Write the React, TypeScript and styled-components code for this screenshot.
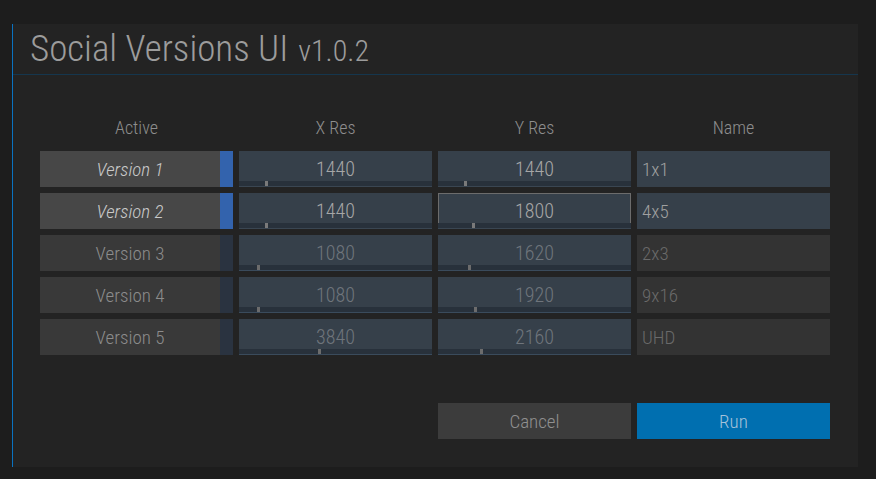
import React from "react";
import styled, { createGlobalStyle, css } from "styled-components";

const GlobalStyle = createGlobalStyle`
  html, body { margin: 0; padding: 0; background: #1d1d1d; }
  body { font-family: "Roboto Condensed", "Roboto", "Liberation Sans", sans-serif; font-weight: 300; }
`;

const Page = styled.div`
  padding: 24px 0 12px 12px;
`;

const Panel = styled.div`
  width: 845px;
  background: #232323;
  border-left: 1px solid #0a72c0;
`;

const Header = styled.div`
  padding: 7px 0 7px 17px;
  border-bottom: 1px solid #15364d;
`;

const Title = styled.h1`
  margin: 0;
  font-size: 37px;
  line-height: 36px;
  font-weight: 300;
  color: #9c9c9c;
  white-space: nowrap;
`;

const VersionTag = styled.span`
  font-size: 30px;
  line-height: 28px;
  margin-left: 10px;
`;

const Body = styled.div`
  padding: 43px 27px 28px 27px;
`;

const Grid = styled.div`
  display: grid;
  grid-template-columns: repeat(4, 193px);
  column-gap: 6px;
  row-gap: 6px;
`;

const ColHead = styled.div`
  font-size: 18px;
  line-height: 19px;
  height: 19px;
  text-align: center;
  color: #8e8e8e;
  margin-bottom: 8px;
`;

const ActiveCell = styled.div`
  display: flex;
  height: 36px;
`;

const ToggleButton = styled.button<{ $on: boolean }>`
  flex: 1;
  border: none;
  margin: 0;
  padding: 0;
  font-family: inherit;
  font-weight: 300;
  font-size: 19px;
  ${(p) =>
    p.$on
      ? css`
          background: #474747;
          color: #cacaca;
          font-style: italic;
        `
      : css`
          background: #393939;
          color: #8c8c8c;
        `}
`;

const Indicator = styled.div<{ $on: boolean }>`
  width: 13px;
  background: ${(p) => (p.$on ? "#3363ad" : "#2a3340")};
`;

const NumCell = styled.div<{ $focus?: boolean }>`
  height: 36px;
  display: flex;
  flex-direction: column;
  background: #36404a;
  outline: ${(p) => (p.$focus ? "1px solid #6c6c6c" : "none")};
  outline-offset: -1px;
`;

const NumValue = styled.div<{ $on: boolean }>`
  flex: 1;
  display: flex;
  align-items: center;
  justify-content: center;
  padding-top: 6px;
  font-size: 20px;
  color: ${(p) => (p.$on ? "#a6a6a6" : "#6f757c")};
`;

const Track = styled.div<{ $on: boolean }>`
  position: relative;
  height: 5px;
  background: #28313b;
  border-bottom: 1px solid ${(p) => (p.$on ? "#3a4652" : "#3a4b5c")};
`;

const Handle = styled.div<{ $on: boolean }>`
  position: absolute;
  top: 0;
  width: 3px;
  height: 5px;
  background: ${(p) => (p.$on ? "#7a7a7a" : "#6c6c6c")};
`;

const NameCell = styled.div<{ $on: boolean }>`
  height: 36px;
  display: flex;
  align-items: center;
  padding-left: 5px;
  box-sizing: border-box;
  font-size: 19px;
  background: ${(p) => (p.$on ? "#36404a" : "#333333")};
  color: ${(p) => (p.$on ? "#a0a0a0" : "#6a6a6a")};
`;

const ButtonRow = styled.div`
  display: grid;
  grid-template-columns: repeat(4, 193px);
  column-gap: 6px;
  margin-top: 48px;
`;

const ActionButton = styled.button<{ $primary?: boolean; $col: number }>`
  grid-column: ${(p) => p.$col};
  height: 36px;
  border: none;
  margin: 0;
  padding: 0;
  font-family: inherit;
  font-weight: 300;
  font-size: 19px;
  background: ${(p) => (p.$primary ? "#006fb0" : "#3c3c3c")};
  color: ${(p) => (p.$primary ? "#a6c2da" : "#909090")};
`;

type Row = { name: string; x: number; y: number; label: string; on: boolean; focusY?: boolean };

const rows: Row[] = [
  { name: "Version 1", x: 1440, y: 1440, label: "1x1", on: true },
  { name: "Version 2", x: 1440, y: 1800, label: "4x5", on: true, focusY: true },
  { name: "Version 3", x: 1080, y: 1620, label: "2x3", on: false },
  { name: "Version 4", x: 1080, y: 1920, label: "9x16", on: false },
  { name: "Version 5", x: 3840, y: 2160, label: "UHD", on: false },
];

const handleLeft = (v: number) => Math.round((v / 8192) * 181 - 6);

function Slider({ value, on, focus }: { value: number; on: boolean; focus?: boolean }) {
  return (
    <NumCell $focus={focus}>
      <NumValue $on={on}>{value}</NumValue>
      <Track $on={on}>
        <Handle $on={on} style={{ left: handleLeft(value) }} />
      </Track>
    </NumCell>
  );
}

export default function App() {
  return (
    <>
      <GlobalStyle />
      <Page>
        <Panel>
          <Header>
            <Title>
              Social Versions UI<VersionTag>v1.0.2</VersionTag>
            </Title>
          </Header>
          <Body>
            <Grid>
              <ColHead>Active</ColHead>
              <ColHead>X Res</ColHead>
              <ColHead>Y Res</ColHead>
              <ColHead>Name</ColHead>
              {rows.map((r) => (
                <React.Fragment key={r.name}>
                  <ActiveCell>
                    <ToggleButton $on={r.on}>{r.name}</ToggleButton>
                    <Indicator $on={r.on} />
                  </ActiveCell>
                  <Slider value={r.x} on={r.on} />
                  <Slider value={r.y} on={r.on} focus={r.focusY} />
                  <NameCell $on={r.on}>{r.label}</NameCell>
                </React.Fragment>
              ))}
            </Grid>
            <ButtonRow>
              <ActionButton $col={3}>Cancel</ActionButton>
              <ActionButton $col={4} $primary>
                Run
              </ActionButton>
            </ButtonRow>
          </Body>
        </Panel>
      </Page>
    </>
  );
}
